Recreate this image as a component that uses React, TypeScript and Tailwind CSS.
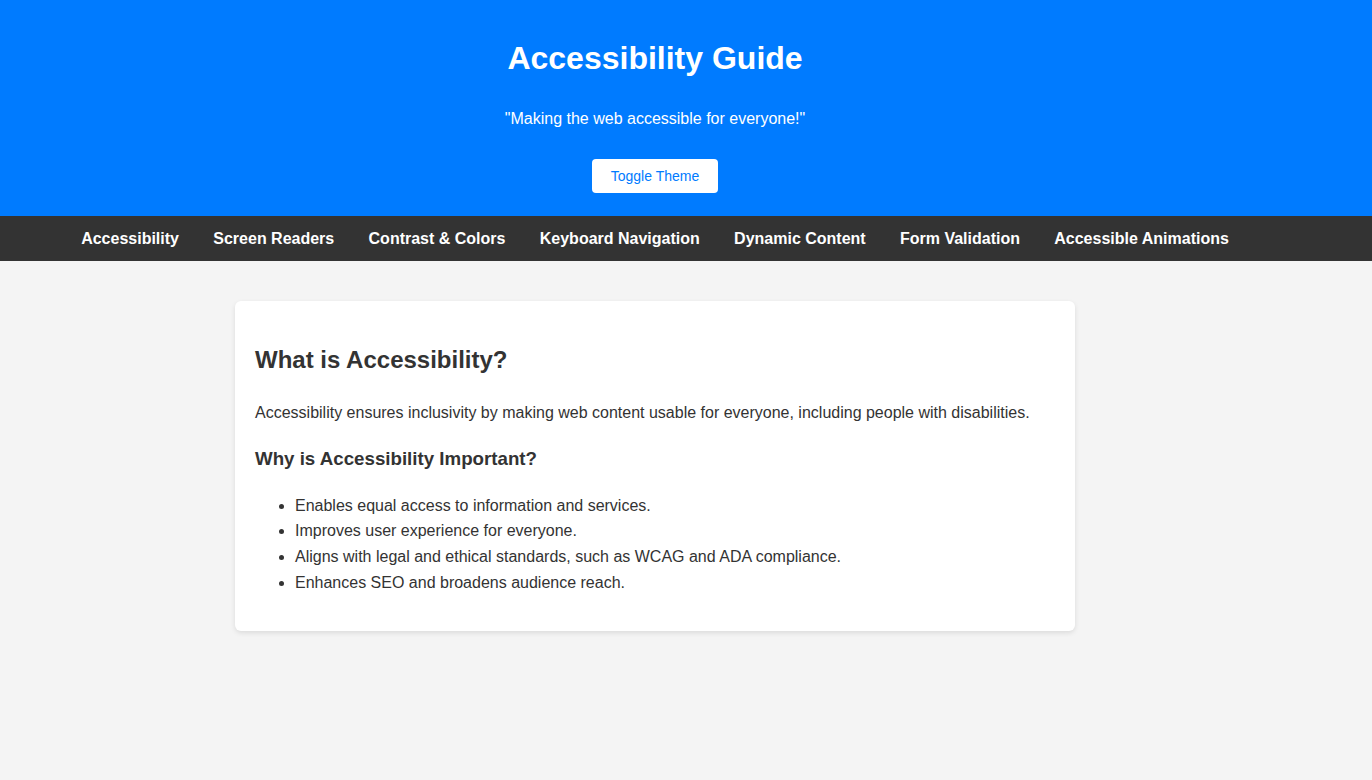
import { useState } from "react";

const navLinks = [
  "Accessibility",
  "Screen Readers",
  "Contrast & Colors",
  "Keyboard Navigation",
  "Dynamic Content",
  "Form Validation",
  "Accessible Animations",
];

const reasons = [
  "Enables equal access to information and services.",
  "Improves user experience for everyone.",
  "Aligns with legal and ethical standards, such as WCAG and ADA compliance.",
  "Enhances SEO and broadens audience reach.",
];

export default function App() {
  const [dark, setDark] = useState(false);

  return (
    <div
      className={`min-h-screen font-['Liberation_Sans',Arial,sans-serif] leading-[1.6] ${
        dark ? "bg-[#222] text-[#eee]" : "bg-[#f4f4f4] text-[#333]"
      }`}
    >
      {/* header */}
      <header className="bg-[#007bff] text-white flex flex-col items-center pt-[33px] pb-[23px] pr-[62px]">
        <h1 className="text-[32px] font-bold leading-[51.2px]">Accessibility Guide</h1>
        <p className="mt-[22px] text-[16px] leading-[25.6px]">"Making the web accessible for everyone!"</p>
        <button
          onClick={() => setDark(!dark)}
          className="mt-[27px] bg-white text-[#007bff] text-[14px] leading-[16px] px-[19px] py-[9px] rounded-[4px] cursor-pointer"
        >
          Toggle Theme
        </button>
      </header>

      {/* nav */}
      <nav className="bg-[#333] py-[10px] pr-[62px]">
        <ul className="flex justify-center gap-[34.3px]">
          {navLinks.map((link) => (
            <li key={link}>
              <a href="#" className="text-white font-bold text-[16px] leading-[25.6px]">
                {link}
              </a>
            </li>
          ))}
        </ul>
      </nav>

      {/* main */}
      <main className="pt-[40px] pr-[62px]">
        <section
          className={`mx-auto w-[840px] p-[20px] rounded-[6px] shadow-[0_2px_5px_rgba(0,0,0,0.1)] ${
            dark ? "bg-[#333]" : "bg-white"
          }`}
        >
          <h2 className="mt-[20px] text-[24px] font-bold leading-[38.4px]">What is Accessibility?</h2>
          <p className="mt-[20px] text-[16px]">
            Accessibility ensures inclusivity by making web content usable for everyone, including people with
            disabilities.
          </p>
          <h3 className="mt-[18.7px] text-[18.72px] font-bold leading-[29.95px]">Why is Accessibility Important?</h3>
          <ul className="mt-[18.7px] mb-[16px] list-disc pl-[40px] text-[16px]">
            {reasons.map((r) => (
              <li key={r}>{r}</li>
            ))}
          </ul>
        </section>
      </main>
    </div>
  );
}
